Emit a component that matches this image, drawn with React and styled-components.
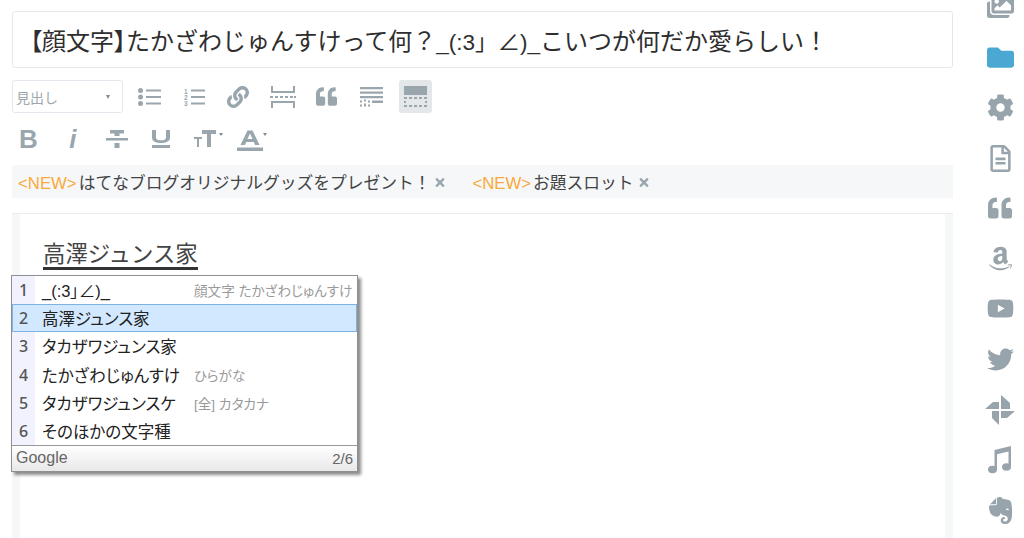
import React from 'react';
import styled, { createGlobalStyle } from 'styled-components';
import {
  FaAmazon,
  FaCog,
  FaEvernote,
  FaFolder,
  FaImages,
  FaLink,
  FaQuoteLeft,
  FaRegFileAlt,
  FaTimes,
  FaTwitter,
  FaYoutube,
} from 'react-icons/fa';

const GlobalStyle = createGlobalStyle`
  html, body {
    margin: 0;
    height: 538px;
    overflow: hidden;
    background: #fff;
    font-family: "Liberation Sans", "Noto Sans CJK JP", sans-serif;
    color: #333;
  }
`;

const Page = styled.div`
  display: flex;
  height: 538px;
  overflow: hidden;
`;

const Main = styled.main`
  display: flex;
  flex-direction: column;
  width: 941px;
  margin-left: 12px;
  padding-top: 11px;
  box-sizing: border-box;
`;

const TitleInput = styled.div`
  height: 57px;
  box-sizing: border-box;
  padding-left: 17px;
  display: flex;
  align-items: center;
  border: 1px solid #e4e8ee;
  border-radius: 3px;
  font-size: 24px;
  white-space: nowrap;
  color: #2e2e2e;
`;

const TitleTag = styled.span`
  font-feature-settings: "palt";
`;

const TitleFace = styled.span`
  font-size: 22.5px;
`;

const Toolbar = styled.div`
  display: flex;
  flex-direction: column;
  gap: 9px;
  margin-top: 12px;
`;

const ToolRow = styled.div`
  display: flex;
  align-items: center;
  gap: 11.3px;
`;

const HeadingSelect = styled.div`
  width: 111px;
  height: 33px;
  box-sizing: border-box;
  margin-right: -1px;
  padding: 0 12px 0 3px;
  display: flex;
  align-items: center;
  justify-content: space-between;
  border: 1px solid #e4e8ee;
  border-radius: 3px;
  font-size: 14px;
  color: #a0a8ae;
`;

const Caret = styled.span`
  width: 0;
  height: 0;
  border-left: 2.5px solid transparent;
  border-right: 2.5px solid transparent;
  border-top: 4px solid #7f8a92;
`;

const ToolButton = styled.button`
  width: 33px;
  height: 33px;
  padding: 0;
  border: none;
  border-radius: 3px;
  display: flex;
  align-items: center;
  justify-content: center;
  position: relative;
  font-family: "Liberation Sans", sans-serif;
  color: #9aa6ae;
  background: ${(p) => (p.$active ? '#e4e7ea' : 'transparent')};
`;

const Letter = styled.span`
  font-size: 26px;
  line-height: 26px;
  font-weight: 700;
  font-style: ${(p) => (p.$italic ? 'italic' : 'normal')};
`;

const SmallCaret = styled.span`
  position: absolute;
  top: 11px;
  right: -1px;
  width: 0;
  height: 0;
  border-left: 2.5px solid transparent;
  border-right: 2.5px solid transparent;
  border-top: 3.5px solid #7f8a92;
`;

const NoticeBar = styled.div`
  height: 33px;
  margin-top: 10px;
  padding-left: 6px;
  display: flex;
  align-items: center;
  gap: 26px;
  background: #f6f7f9;
  font-size: 16.75px;
  white-space: nowrap;
`;

const Notice = styled.span`
  display: flex;
  align-items: center;
  gap: 4px;
  color: #444;
`;

const NewLabel = styled.span`
  margin-right: 2px;
  color: #f9a93a;
`;

const CloseIcon = styled(FaTimes)`
  width: 12px;
  height: 13px;
  margin-top: 2px;
  color: #9aa6ae;
`;

const EditorFrame = styled.div`
  position: relative;
  flex: 1;
  margin-top: 15px;
  padding: 0 8px;
  border-top: 1px solid #e9ebee;
  background: #f6f7f9;
`;

const EditorBody = styled.div`
  height: 100%;
  padding: 29px 0 0 23px;
  background: #fff;
`;

const Composing = styled.span`
  display: inline-block;
  font-size: 22.4px;
  line-height: 24px;
  color: #444;
  border-bottom: 3px solid #333;
`;

const Candidates = styled.div`
  position: absolute;
  top: 61px;
  left: -1px;
  width: 347px;
  height: 197px;
  box-sizing: border-box;
  display: flex;
  flex-direction: column;
  background: #fff;
  border: 1px solid #8f8f8f;
  box-shadow: 3px 3px 3px rgba(0, 0, 0, 0.45);
`;

const CandidateList = styled.div`
  display: flex;
  flex-direction: column;
`;

const Candidate = styled.div`
  height: 28.2px;
  box-sizing: border-box;
  display: flex;
  align-items: center;
  background: ${(p) => (p.$selected ? '#d1e8ff' : 'transparent')};
  outline: ${(p) => (p.$selected ? '1px solid #7db2e6' : 'none')};
  outline-offset: -1px;
`;

const CandidateNumber = styled.span`
  width: 23px;
  align-self: stretch;
  display: flex;
  align-items: center;
  justify-content: center;
  font-family: "Noto Sans", sans-serif;
  font-size: 16px;
  font-weight: 500;
  color: #555;
  background: ${(p) => (p.$selected ? 'transparent' : '#f2f2fe')};
`;

const CandidateText = styled.span`
  width: 152px;
  margin-left: 7px;
  font-size: 16.5px;
  font-feature-settings: "palt";
  color: #222;
  white-space: nowrap;
`;

const CandidateHint = styled.span`
  font-size: 13.6px;
  font-feature-settings: "palt";
  color: #9a9a9a;
  white-space: nowrap;
`;

const CandidateFooter = styled.div`
  flex: 1;
  padding: 0 4px 1px 4px;
  display: flex;
  align-items: center;
  justify-content: space-between;
  border-top: 1px solid #9a9a9a;
  background: linear-gradient(#ffffff, #e8e8e8);
  color: #666;
`;

const Brand = styled.span`
  font-size: 16px;
`;

const PageCount = styled.span`
  font-size: 15px;
`;

const Sidebar = styled.aside`
  flex: 1;
  display: flex;
  flex-direction: column;
  align-items: center;
  margin-top: -18px;
  padding-left: 23px;
`;

const SideItem = styled.div`
  height: 50.3px;
  flex-shrink: 0;
  display: flex;
  align-items: center;
  justify-content: center;
  color: ${(p) => (p.$active ? '#4aa8d2' : '#98a4ac')};
  font-size: ${(p) => p.$size || 27}px;
`;

const Line = styled.svg`
  display: block;
  fill: currentColor;
`;

const BulletIcon = () => (
  <Line width="23" height="18" viewBox="0 0 23 18">
    <circle cx="2.5" cy="2.500" r="2.500" />
    <circle cx="2.5" cy="9" r="2.500" />
    <circle cx="2.5" cy="15.500" r="2.500" />
    <path d="M8 1.500h15v2H8zM8 8h15v2H8zM8 14.500h15v2H8z" />
  </Line>
);

const NumberIcon = () => (
  <Line width="21" height="18" viewBox="0 0 21 18">
    <text x="0" y="5.500" fontSize="6.500" fontWeight="700">1</text>
    <text x="0" y="12" fontSize="6.500" fontWeight="700">2</text>
    <text x="0" y="18" fontSize="6.500" fontWeight="700">3</text>
    <path d="M7 1.500h14v2H7zM7 8h14v2H7zM7 14.500h14v2H7z" />
  </Line>
);

const MoreIcon = () => (
  <Line width="26" height="22" viewBox="0 0 26 22">
    <path d="M1 0h2v5h20V0h2v7H1zM1 22h2v-5h20v5h2v-7H1z" />
    <path d="M0 10h3v2H0zM5 10h3v2H5zM10 10h3v2h-3zM15 10h3v2h-3zM20 10h3v2h-3zM24 10h2v2h-2z" />
  </Line>
);

const ReadMoreIcon = () => (
  <Line width="23" height="20" viewBox="0 0 23 20">
    <path d="M0 0h23v2.200H0zM0 4.500h23v2.200H0zM0 9h23v2.200H0zM12 13.500h11v2.500H12z" />
    <path d="M0 13.500h2v2H0zM4 12.500h2v2H4zM8 13.500h2v2H8zM0 17.500h2v2H0zM4 16.500h2v3H4zM8 17.500h2v2H8z" />
  </Line>
);

const EyecatchIcon = () => (
  <Line width="23" height="21" viewBox="0 0 23 21">
    <path d="M0 0h23v9H0z" />
    <path d="M0 11h3v2H0zM5 11h3v2H5zM10 11h3v2h-3zM15 11h3v2h-3zM20 11h3v2h-3zM0 15h2v2H0zM21 15h2v2h-2zM0 19h3v2H0zM5 19h3v2H5zM10 19h3v2h-3zM15 19h3v2h-3zM20 19h3v2h-3z" />
  </Line>
);

const StrikeIcon = () => (
  <Line width="22" height="18" viewBox="0 0 22 18">
    <path d="M4 0h14v3.500h-4.500V6h-5V3.500H4zM0 8h22v2.500H0zM8.500 13h5v5h-5z" />
  </Line>
);

const UnderlineIcon = () => (
  <Line width="18" height="18" viewBox="0 0 18 18">
    <path d="M0 0h4v7.500c0 2 2 2.800 5 2.800s5-.8 5-2.800V0h4v7.500c0 4-4 5.500-9 5.500s-9-1.500-9-5.500zM0 15h18v3H0z" />
  </Line>
);

const TextSizeIcon = () => (
  <Line width="24" height="22" viewBox="0 0 24 22">
    <path d="M8 2h14v4h-5v13h-4V6H8zM0 9h8v2H5v8H3v-8H0z" />
  </Line>
);

const TextColorIcon = () => (
  <Line width="26" height="24" viewBox="0 0 26 24">
    <path d="M10.500 3.500h5l7 14.500h-4.500l-1.200-3H9.200L8 18H3.500zM10.500 12h5l-2.500-5.500z" fillRule="evenodd" />
    <path d="M0 20.500h26V24H0z" />
  </Line>
);

const PhotosIcon = () => (
  <Line width="32" height="32" viewBox="0 0 32 32">
    <path d="M17 1 26 9V15H17zM31 17 23 24H17V17zM15 31 8 24V17H15zM1 15 9 8H15V15z" />
  </Line>
);

const MusicIcon = () => (
  <Line width="24" height="28" viewBox="0 0 24 28">
    <ellipse cx="4.500" cy="23.500" rx="4.500" ry="3.700" />
    <ellipse cx="18.500" cy="21" rx="4.500" ry="3.700" />
    <path d="M6.500 4 23 0v21h-2.500V5.500L9 8.300V23.500H6.500z" />
  </Line>
);

const mainTools = [
  { key: 'ul', icon: <BulletIcon /> },
  { key: 'ol', icon: <NumberIcon /> },
  { key: 'link', icon: <FaLink size={22} /> },
  { key: 'more', icon: <MoreIcon /> },
  { key: 'quote', icon: <FaQuoteLeft size={21} /> },
  { key: 'read', icon: <ReadMoreIcon /> },
  { key: 'eye', icon: <EyecatchIcon />, active: true },
];

const textTools = [
  { key: 'b', icon: <Letter>B</Letter> },
  { key: 'i', icon: <Letter $italic>i</Letter> },
  { key: 's', icon: <StrikeIcon /> },
  { key: 'u', icon: <UnderlineIcon /> },
  { key: 'size', icon: <TextSizeIcon />, caret: true },
  { key: 'color', icon: <TextColorIcon />, caret: true },
];

const candidates = [
  { text: '_(:3」∠)_', hint: '顔文字 たかざわじゅんすけ' },
  { text: '高澤ジュンス家', selected: true },
  { text: 'タカザワジュンス家' },
  { text: 'たかざわじゅんすけ', hint: 'ひらがな' },
  { text: 'タカザワジュンスケ', hint: '[全] カタカナ' },
  { text: 'そのほかの文字種' },
];

const sideIcons = [
  { key: 'images', icon: <FaImages /> },
  { key: 'folder', icon: <FaFolder />, active: true },
  { key: 'gear', icon: <FaCog /> },
  { key: 'doc', icon: <FaRegFileAlt /> },
  { key: 'quote', icon: <FaQuoteLeft />, size: 24 },
  { key: 'amazon', icon: <FaAmazon /> },
  { key: 'youtube', icon: <FaYoutube /> },
  { key: 'twitter', icon: <FaTwitter /> },
  { key: 'photos', icon: <PhotosIcon /> },
  { key: 'music', icon: <MusicIcon /> },
  { key: 'evernote', icon: <FaEvernote />, size: 31 },
];

const App = () => (
  <Page>
    <GlobalStyle />
    <Main>
      <TitleInput>
        <TitleTag>【顔文字】</TitleTag>
        たかざわじゅんすけって何？
        <TitleFace>_(:3」∠)_</TitleFace>
        こいつが何だか愛らしい！
      </TitleInput>
      <Toolbar>
        <ToolRow>
          <HeadingSelect>
            見出し
            <Caret />
          </HeadingSelect>
          {mainTools.map((t) => (
            <ToolButton key={t.key} $active={t.active}>
              {t.icon}
            </ToolButton>
          ))}
        </ToolRow>
        <ToolRow>
          {textTools.map((t) => (
            <ToolButton key={t.key}>
              {t.icon}
              {t.caret && <SmallCaret />}
            </ToolButton>
          ))}
        </ToolRow>
      </Toolbar>
      <NoticeBar>
        <Notice>
          <span>
            <NewLabel>&lt;NEW&gt;</NewLabel>はてなブログオリジナルグッズをプレゼント！
          </span>
          <CloseIcon />
        </Notice>
        <Notice>
          <span>
            <NewLabel>&lt;NEW&gt;</NewLabel>お題スロット
          </span>
          <CloseIcon />
        </Notice>
      </NoticeBar>
      <EditorFrame>
        <EditorBody>
          <Composing>高澤ジュンス家</Composing>
        </EditorBody>
        <Candidates>
          <CandidateList>
            {candidates.map((c, i) => (
              <Candidate key={c.text} $selected={c.selected}>
                <CandidateNumber $selected={c.selected}>{i + 1}</CandidateNumber>
                <CandidateText>{c.text}</CandidateText>
                {c.hint && <CandidateHint>{c.hint}</CandidateHint>}
              </Candidate>
            ))}
          </CandidateList>
          <CandidateFooter>
            <Brand>Google</Brand>
            <PageCount>2/6</PageCount>
          </CandidateFooter>
        </Candidates>
      </EditorFrame>
    </Main>
    <Sidebar>
      {sideIcons.map((s) => (
        <SideItem key={s.key} $active={s.active} $size={s.size}>
          {s.icon}
        </SideItem>
      ))}
    </Sidebar>
  </Page>
);

export default App;
